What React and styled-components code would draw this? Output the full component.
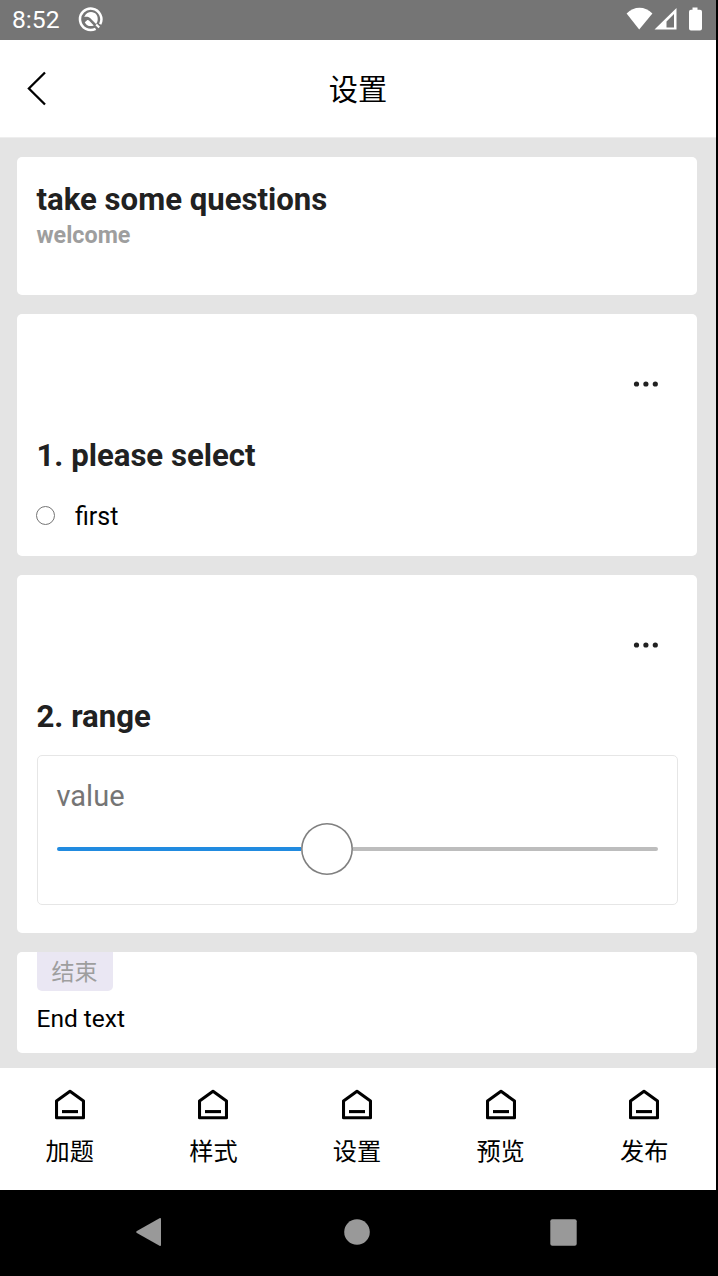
import React from "react";
import styled, { createGlobalStyle } from "styled-components";

const GlobalStyle = createGlobalStyle`
  * { box-sizing: border-box; }
  body {
    margin: 0;
    background: #000;
    font-family: Roboto, "Noto Sans CJK SC", sans-serif;
    color: #000;
  }
  svg { display: block; }
`;

const Screen = styled.div`
  width: 716px;
  height: 1276px;
  display: flex;
  flex-direction: column;
  overflow: hidden;
`;

const StatusBar = styled.header`
  height: 40px;
  flex: none;
  display: flex;
  align-items: center;
  background: #757575;
  color: #fff;
  padding: 0 12px 0 12px;
`;

const Clock = styled.span`
  font-size: 24.7px;
  line-height: 40px;
  width: 66px;
  white-space: nowrap;
`;

const StatusIcons = styled.div`
  margin-left: auto;
`;

const AppBar = styled.div`
  height: 98px;
  flex: none;
  display: grid;
  grid-template-columns: 60px 1fr 60px;
  align-items: center;
  background: #fff;
  border-bottom: 1px solid #eee;
`;

const BackButton = styled.button`
  border: 0;
  background: none;
  padding: 0 0 0 26px;
  height: 36px;
`;

const PageTitle = styled.h1`
  margin: 0;
  padding: 3px 0 0;
  text-align: center;
  font-size: 29.2px;
  line-height: 44px;
  font-weight: 400;
`;

const Content = styled.main`
  height: 930px;
  flex: none;
  display: flex;
  flex-direction: column;
  gap: 19px;
  padding: 19px 19px 0 17px;
  background: #e4e4e4;
`;

const Card = styled.section`
  height: ${(p) => p.$height}px;
  flex: none;
  padding: ${(p) => p.$top || 0}px 19.5px 0;
  background: #fff;
  border-radius: 5px;
`;

const Heading = styled.h2`
  margin: 0;
  font-size: 31.15px;
  line-height: 40px;
  font-weight: 700;
  color: #212121;
`;

const Subtitle = styled.p`
  margin: 0;
  font-size: 23.3px;
  line-height: 30px;
  font-weight: 700;
  color: #9e9e9e;
`;

const MoreButton = styled.button`
  display: block;
  border: 0;
  background: none;
  padding: 0;
  margin: 0 19px 49px auto;
`;

const Option = styled.label`
  display: flex;
  align-items: center;
  gap: 20px;
  margin-top: 24px;
  font-size: 25px;
  line-height: 34px;
`;

const Radio = styled.span`
  width: 19px;
  height: 19px;
  margin-top: -3px;
  margin-left: -0.5px;
  border: 1px solid #757575;
  border-radius: 50%;
`;

const RangeBox = styled.div`
  height: 150px;
  margin-top: 18px;
  padding: 19px 18.5px 0 19px;
  border: 1px solid #e6e6e6;
  border-radius: 5px;
`;

const RangeLabel = styled.div`
  font-size: 29px;
  line-height: 42px;
  color: #757575;
`;

const Slider = styled.div`
  display: flex;
  align-items: center;
  height: 52px;
  margin-top: 6px;
`;

const Track = styled.div`
  height: 4px;
  background: ${(p) => (p.$active ? "#218be0" : "#bdbdbd")};
  border-radius: ${(p) => (p.$active ? "2px 0 0 2px" : "0 2px 2px 0")};
  width: ${(p) => (p.$active ? "244px" : "auto")};
  flex: ${(p) => (p.$active ? "none" : 1)};
`;

const Thumb = styled.div`
  width: 52px;
  height: 52px;
  flex: none;
  border-radius: 50%;
  background: #fff;
  box-shadow: inset 0 0 0 1.6px #808080;
`;

const Tag = styled.span`
  display: block;
  width: 76px;
  height: 39px;
  background: #eae7f3;
  color: #9e9e9e;
  border-radius: 0 0 5px 5px;
  text-align: center;
  font-size: 23px;
  line-height: 42px;
`;

const EndText = styled.p`
  margin: 11px 0 0;
  font-size: 24.5px;
  line-height: 34px;
`;

const TabBar = styled.nav`
  height: 122px;
  flex: none;
  width: 718px;
  margin-left: -2px;
  display: grid;
  grid-template-columns: repeat(5, 1fr);
  background: #fff;
`;

const Tab = styled.a`
  display: flex;
  flex-direction: column;
  align-items: center;
  gap: 13px;
  padding-top: 20.5px;
  font-size: 24.2px;
  line-height: 36px;
`;

const SystemNav = styled.footer`
  flex: 1;
  background: #000;
  display: flex;
  align-items: center;
  justify-content: center;
  padding-right: 3px;
  padding-bottom: 2px;
  gap: 180.5px;
`;

const HomeIcon = () => (
  <svg width="30" height="32" viewBox="0 0 30 32" fill="none" stroke="#000" strokeWidth="3.1">
    <path d="M1.500 12 15 2.300 28.500 12v16.700h-27z" strokeLinejoin="round" />
    <path d="M7 22.600h16" />
  </svg>
);

const AppMark = () => (
  <svg width="26" height="26" viewBox="0 0 26 26" fill="none" stroke="#fff">
    <path d="M17.600 21.800A10.700 10.700 0 1 1 22.200 17.200" strokeWidth="2.500" />
    <path d="M18.200 17.500l3 3" strokeWidth="2.200" />
    <path d="M6.200 10C8 6.300 10.500 5.100 13 5.100c4.500 0 7.200 3.600 6.700 7.600-.2 1.900-.8 3.100-1.700 4.300l-5.900-6c-1.700-1.500-4-1.600-5.900-1z" fill="#fff" stroke="none" />
    <path d="M6.800 15.200l2-1.700c.8-.7 1.500-.6 2.200 0l4.800 4.900c-3.500 1.500-7.300.5-9-3.200z" fill="#fff" stroke="none" />
  </svg>
);

const Indicators = () => (
  <svg width="78" height="26" viewBox="0 0 78 26" fill="#fff">
    <path d="M.6 6.500C8-1.300 19-1.300 26.400 6.500L13.200 22.500z" />
    <path fillRule="evenodd" d="M50.500 1V22.500H28.500zM48 7 40.500 14.500V20.500H48z" />
    <path d="M66.500.5h5v2.300h2.500q2 0 2 2V21.500q0 2-2 2H65q-2 0-2-2V4.800q0-2 2-2h1.500z" />
  </svg>
);

const More = () => (
  <MoreButton aria-label="more">
    <svg width="26" height="6" viewBox="0 0 26 6" fill="#212121">
      <circle cx="3.500" cy="3" r="2.600" />
      <circle cx="12.900" cy="3" r="2.600" />
      <circle cx="22.300" cy="3" r="2.600" />
    </svg>
  </MoreButton>
);

const tabs = ["加题", "样式", "设置", "预览", "发布"];

export default function App() {
  return (
    <Screen>
      <GlobalStyle />
      <StatusBar>
        <Clock>8:52</Clock>
        <AppMark />
        <StatusIcons>
          <Indicators />
        </StatusIcons>
      </StatusBar>
      <AppBar>
        <BackButton aria-label="back">
          <svg width="22" height="36" viewBox="0 0 22 36" fill="none" stroke="#000" strokeWidth="2.300">
            <path d="M19 1.500 2.900 17.500l16.100 16" />
          </svg>
        </BackButton>
        <PageTitle>设置</PageTitle>
      </AppBar>
      <Content>
        <Card $height={138} $top={23}>
          <Heading>take some questions</Heading>
          <Subtitle>welcome</Subtitle>
        </Card>
        <Card $height={242} $top={67}>
          <More />
          <Heading>1. please select</Heading>
          <Option>
            <Radio />
            first
          </Option>
        </Card>
        <Card $height={358} $top={67}>
          <More />
          <Heading>2. range</Heading>
          <RangeBox>
            <RangeLabel>value</RangeLabel>
            <Slider>
              <Track $active />
              <Thumb />
              <Track />
            </Slider>
          </RangeBox>
        </Card>
        <Card $height={101}>
          <Tag>结束</Tag>
          <EndText>End text</EndText>
        </Card>
      </Content>
      <TabBar>
        {tabs.map((name) => (
          <Tab key={name}>
            <HomeIcon />
            {name}
          </Tab>
        ))}
      </TabBar>
      <SystemNav>
        <svg width="27" height="28" viewBox="0 0 27 28" fill="#999">
          <path d="M23.500.3q1.500-.8 1.500 1v25.400q0 1.800-1.500 1L.9 15q-1.400-1 0-2z" />
        </svg>
        <svg width="26" height="26" viewBox="0 0 26 26" fill="#999">
          <circle cx="13" cy="13" r="12.800" />
        </svg>
        <svg width="27" height="27" viewBox="0 0 27 27" fill="#999">
          <rect x=".3" y=".3" width="26.400" height="26.400" rx="2" />
        </svg>
      </SystemNav>
    </Screen>
  );
}
